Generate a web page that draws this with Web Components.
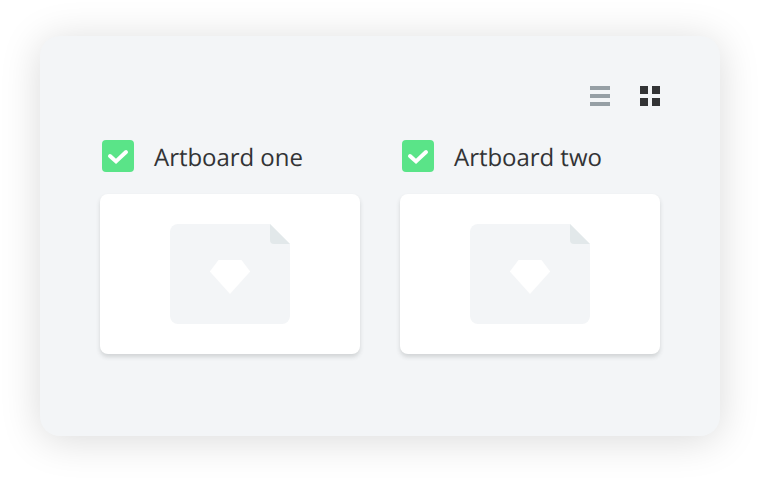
<!DOCTYPE html>
<html lang="en">
<head>
<meta charset="utf-8">
<title>Artboards</title>
<style>
html, body { margin: 0; height: 100%; background: #fff; }
body { box-sizing: border-box; padding: 36px 40px 44px; overflow: hidden; font-family: "Open Sans", "Noto Sans", sans-serif; color: #323335; }
</style>
</head>
<body>
<artboard-panel>
  <view-toggle slot="tools"></view-toggle>
  <artboard-card>Artboard one</artboard-card>
  <artboard-card>Artboard two</artboard-card>
</artboard-panel>
<script>
const define = (name, html) => {
  const template = document.createElement('template');
  template.innerHTML = html;
  customElements.define(name, class extends HTMLElement {
    constructor() {
      super();
      this.attachShadow({ mode: 'open' }).append(template.content.cloneNode(true));
    }
  });
};

define('view-toggle', `
<style>
:host { display: flex; gap: 30px; }
svg { display: block; width: 20px; height: 20px; }
</style>
<svg viewBox="0 0 20 20" fill="#969fa5"><path d="M0 0h20v4H0zM0 8h20v4H0zM0 16h20v4H0z"/></svg>
<svg viewBox="0 0 20 20" fill="#323335"><path d="M0 0h8v8H0zM12 0h8v8h-8zM0 12h8v8H0zM12 12h8v8h-8z"/></svg>`);

define('check-box', `
<style>
:host { display: grid; place-items: center; width: 32px; height: 32px; border-radius: 4px; background: #5ae488; }
svg { display: block; }
</style>
<svg width="32" height="32" viewBox="0 0 32 32" fill="none" stroke="#fff" stroke-width="4" stroke-linecap="round"><path d="M8 16l6 5.4L24 12"/></svg>`);

define('file-preview', `
<style>
:host { display: block; width: 120px; height: 100px; }
svg { display: block; }
</style>
<svg width="120" height="100" viewBox="0 0 120 100">
<path fill="#f3f5f7" d="M8 0h92l20 20v72a8 8 0 0 1-8 8H8a8 8 0 0 1-8-8V8a8 8 0 0 1 8-8z"/>
<path fill="#e2e8ea" d="M100 0l20 20h-16a4 4 0 0 1-4-4z"/>
<path fill="#fff" d="M48.5 36h23L80.2 47.5 60 70 39.8 47.5z"/>
</svg>`);

define('artboard-card', `
<style>
:host { display: flex; flex-direction: column; gap: 22px; }
header { display: flex; align-items: center; gap: 20px; height: 32px; padding-left: 2px; }
.label { font-size: 24px; line-height: 32px; white-space: nowrap; padding-top: 4px; text-rendering: geometricPrecision; letter-spacing: -0.04px; }
.preview { display: grid; place-items: center; height: 160px; border-radius: 8px; background: #fff; box-shadow: 0 3px 4px rgba(50,51,53,.17); }
</style>
<header><check-box></check-box><span class="label"><slot></slot></span></header>
<div class="preview"><file-preview></file-preview></div>`);

define('artboard-panel', `
<style>
:host { display: flex; flex-direction: column; gap: 34px; box-sizing: border-box; height: 400px; padding: 50px 60px; border-radius: 20px; background: #f3f5f7; box-shadow: 0 4px 40px rgba(0,0,0,.15); }
.tools { display: flex; justify-content: flex-end; }
.grid { display: grid; grid-template-columns: 260px 260px; gap: 40px; }
</style>
<div class="tools"><slot name="tools"></slot></div>
<div class="grid"><slot></slot></div>`);
</script>
</body>
</html>
